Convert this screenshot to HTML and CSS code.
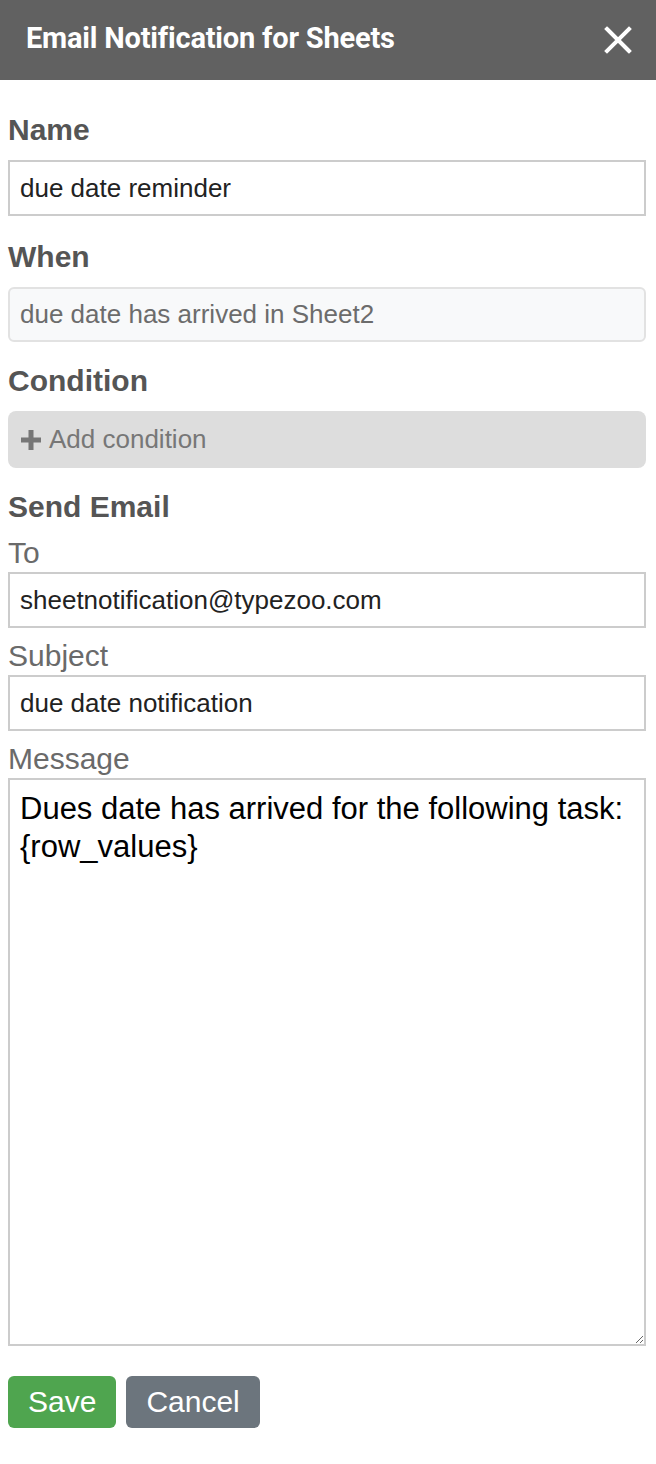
FILE: index.html
```html
<!DOCTYPE html>
<html lang="en">
<head>
<meta charset="utf-8">
<title>Email Notification for Sheets</title>
<link rel="stylesheet" href="styles.css">
</head>
<body>
<header class="topbar">
  <h1 class="title">Email Notification for Sheets</h1>
  <button class="close" aria-label="Close">
    <svg width="28" height="28" viewBox="0 0 28 28"><path d="M3 3 L25 25 M25 3 L3 25" stroke="#fff" stroke-width="4" stroke-linecap="square" fill="none"/></svg>
  </button>
</header>
<main class="form">
  <label class="section">Name</label>
  <input class="field" type="text" value="due date reminder">

  <label class="section">When</label>
  <input class="field disabled" type="text" value="due date has arrived in Sheet2" disabled>

  <label class="section">Condition</label>
  <div class="add-cond">
    <svg class="plus" width="22" height="22" viewBox="0 0 22 22"><path d="M11 1 V21 M1 11 H21" stroke="#767676" stroke-width="5" fill="none"/></svg>
    <span>Add condition</span>
  </div>

  <label class="section send">Send Email</label>
  <label class="sub">To</label>
  <input class="field" type="text" value="sheetnotification@typezoo.com">
  <label class="sub">Subject</label>
  <input class="field" type="text" value="due date notification">
  <label class="sub">Message</label>
  <textarea class="message">Dues date has arrived for the following task:
{row_values}</textarea>

  <div class="actions">
    <button class="btn save">Save</button>
    <button class="btn cancel">Cancel</button>
  </div>
</main>
</body>
</html>
```

FILE: styles.css
```css
* { box-sizing: border-box; }
body {
  margin: 0;
  background: #fff;
  font-family: "Liberation Sans", Arial, sans-serif;
}
.topbar {
  height: 80px;
  background: #616161;
  display: flex;
  align-items: center;
  justify-content: space-between;
  padding: 0 24px 4px 26px;
}
.title {
  margin: 0;
  color: #fff;
  font-family: Roboto, sans-serif;
  font-weight: 700;
  font-size: 29px;
  letter-spacing: -0.2px;
}
.close {
  background: none;
  border: 0;
  padding: 0;
  width: 28px;
  height: 28px;
  display: flex;
  margin-top: 4px;
}
.form {
  display: flex;
  flex-direction: column;
  padding: 32px 10px 0 8px;
}
.section {
  font-size: 30px;
  line-height: 36px;
  font-weight: 700;
  color: #555;
  margin-bottom: 12px;
}
.section.send { margin-bottom: 11px; }
.sub {
  font-size: 30px;
  line-height: 34px;
  color: #6a6a6a;
  margin-bottom: 2px;
}
.field {
  height: 56px;
  border: 2px solid #ccc;
  padding: 0 10px;
  font-family: "Liberation Sans", Arial, sans-serif;
  font-size: 26px;
  color: #222;
  background: #fff;
  margin: 0 0 23px 0;
  outline: none;
}
.sub + .field { margin-bottom: 11px; }
.field.disabled {
  height: 55px;
  background: #f8f9fa;
  border-color: #e2e2e2;
  border-radius: 6px;
  color: #6c6c6c;
  margin-bottom: 21px;
}
.add-cond {
  height: 57px;
  background: #dddddd;
  border-radius: 8px;
  display: flex;
  align-items: center;
  gap: 7px;
  padding-left: 12px;
  color: #777;
  font-size: 26px;
  margin-bottom: 21px;
}
.message {
  height: 568px;
  border: 2px solid #ccc;
  padding: 10px 10px;
  font-family: "Liberation Sans", Arial, sans-serif;
  font-size: 31px;
  line-height: 38px;
  color: #000;
  resize: vertical;
  margin: 0;
  outline: none;
}
.actions {
  display: flex;
  gap: 10px;
  margin-top: 30px;
}
.btn {
  height: 52px;
  border: 0;
  border-radius: 6px;
  padding: 0 20px;
  font-family: "Liberation Sans", Arial, sans-serif;
  font-size: 30px;
  color: #fff;
}
.save { background: #4fa54f; }
.cancel { background: #6c757d; }
```
